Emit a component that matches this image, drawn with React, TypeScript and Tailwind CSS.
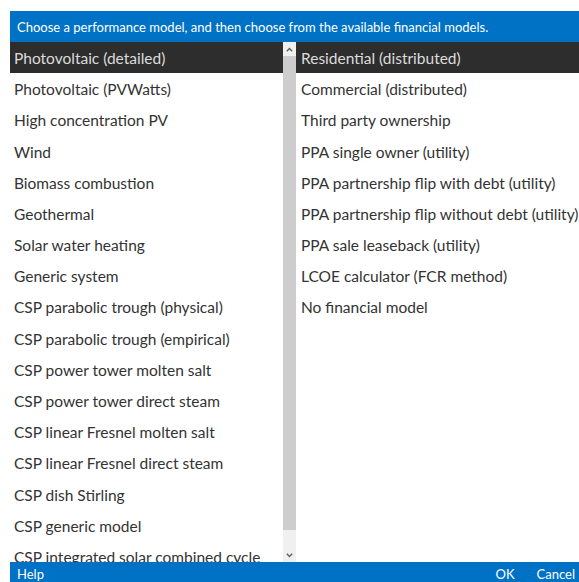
const performanceModels = [
  'Photovoltaic (detailed)',
  'Photovoltaic (PVWatts)',
  'High concentration PV',
  'Wind',
  'Biomass combustion',
  'Geothermal',
  'Solar water heating',
  'Generic system',
  'CSP parabolic trough (physical)',
  'CSP parabolic trough (empirical)',
  'CSP power tower molten salt',
  'CSP power tower direct steam',
  'CSP linear Fresnel molten salt',
  'CSP linear Fresnel direct steam',
  'CSP dish Stirling',
  'CSP generic model',
  'CSP integrated solar combined cycle',
]

const financialModels = [
  'Residential (distributed)',
  'Commercial (distributed)',
  'Third party ownership',
  'PPA single owner (utility)',
  'PPA partnership flip with debt (utility)',
  'PPA partnership flip without debt (utility)',
  'PPA sale leaseback (utility)',
  'LCOE calculator (FCR method)',
  'No financial model',
]

function Row({ label, selected, pad }: { label: string; selected: boolean; pad: string }) {
  return (
    <div
      className={`h-[31.2px] shrink-0 flex items-center whitespace-nowrap pt-[2px] ${pad} ${
        selected ? 'bg-[#2d2d2d] text-[#dcdcdc]' : 'text-[#333333]'
      }`}
    >
      {label}
    </div>
  )
}

function Chevron({ up }: { up?: boolean }) {
  return (
    <svg width="7" height="5" viewBox="0 0 7 5" className={up ? '' : 'rotate-180'}>
      <path d="M0.8 4.2 L3.5 1.4 L6.2 4.2" fill="none" stroke="#606060" strokeWidth="1.4" />
    </svg>
  )
}

export default function App() {
  return (
    <div
      className="w-[579px] h-[582px] bg-white pt-[11px] pl-[10px] flex flex-col overflow-hidden"
      style={{ fontFamily: 'Lato, "Noto Sans", sans-serif' }}
    >
      <div className="h-[31px] shrink-0 bg-[#0072c6] text-white text-[13px] flex items-center pl-[7px] pt-[3px]">
        Choose a performance model, and then choose from the available financial models.
      </div>
      <div className="flex h-[520px] shrink-0 text-[15.5px]">
        <div className="w-[273px] flex flex-col overflow-hidden">
          {performanceModels.map((m, i) => (
            <Row key={m} label={m} selected={i === 0} pad="pl-[4px]" />
          ))}
        </div>
        <div className="w-[13px] bg-[#f0f0f0] flex flex-col items-center">
          <div className="h-[14px] flex items-center justify-center">
            <Chevron up />
          </div>
          <div className="w-[13px] h-[474px] bg-[#cdcdcd]" />
          <div className="flex-1" />
          <div className="h-[14px] flex items-center justify-center">
            <Chevron />
          </div>
        </div>
        <div className="flex-1 flex flex-col overflow-hidden">
          {financialModels.map((m, i) => (
            <Row key={m} label={m} selected={i === 0} pad="pl-[5px]" />
          ))}
        </div>
      </div>
      <div className="h-[20px] shrink-0 bg-[#0072c6] text-white text-[13px] flex items-center pl-[7px] pr-[4px] pt-[6px] overflow-hidden">
        <span>Help</span>
        <span className="ml-auto">OK</span>
        <span className="ml-[22px]">Cancel</span>
      </div>
    </div>
  )
}
